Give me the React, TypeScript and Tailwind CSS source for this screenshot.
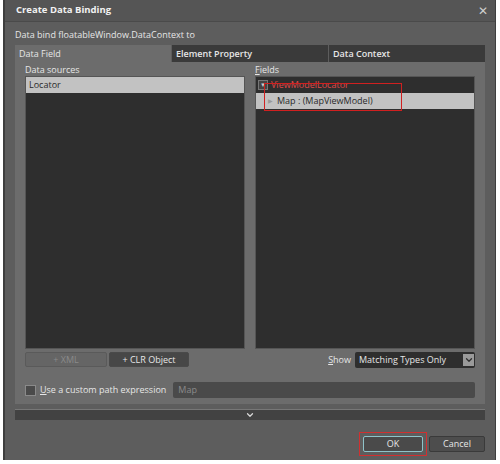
import { ChevronDown } from "lucide-react";

const font = { fontFamily: '"Open Sans", "Noto Sans", sans-serif' };

function Checkbox() {
  return <span className="h-[11px] w-[11px] border border-[#8a8a8a] bg-[#4a4a4a]" />;
}

export default function App() {
  return (
    <div className="h-[464px] w-[500px] bg-white pb-[4px] pl-[3px] pr-[4px]" style={font}>
      <div className="flex h-full flex-col border-l-2 border-r border-[#3e3e3e] bg-[#5d5d5d] text-[#e6e6e6]">
        {/* title bar */}
        <div className="flex h-[22px] shrink-0 items-center justify-between border-b border-[#4a4a4a] bg-[#555555] pl-[11px] pr-[7px]">
          <span className="text-[9.5px] font-bold text-[#f2f2f2]">Create Data Binding</span>
          <span className="text-[12px] leading-none text-[#cfcfcf]">✕</span>
        </div>

        <div className="flex flex-1 flex-col px-[10px]">
          <p className="mt-[5px] h-[16px] text-[9px] leading-[16px]">Data bind floatableWindow.DataContext to</p>

          {/* tabs */}
          <div className="mt-[2px] grid h-[17px] grid-cols-3 gap-[1px] text-[9px] leading-[17px]">
            <div className="bg-[#6c6c6c] px-[4px]">Data Field</div>
            <div className="bg-[#3a3a3a] px-[4px] font-semibold">Element Property</div>
            <div className="bg-[#3a3a3a] px-[4px] font-semibold">Data Context</div>
          </div>

          {/* tab content */}
          <div className="flex h-[342px] flex-col bg-[#6c6c6c] px-[10px] pt-[2px]">
            <div className="grid grid-cols-2 gap-[10px]">
              <div className="flex flex-col">
                <span className="h-[12px] text-[9px] leading-[12px]">Data sources</span>
                <div className="h-[273px] border border-[#555] bg-[#2e2e2e]">
                  <div className="h-[16px] bg-[#c2c2c2] px-[3px] text-[9px] leading-[16px] text-[#2a2a2a]">Locator</div>
                </div>
                <div className="mt-[3px] flex gap-[2px] text-[9px]">
                  <div className="flex h-[15px] w-[82px] items-center justify-center rounded-[2px] border border-[#5a5a5a] bg-[#656565] text-[#8a8a8a]">+ XML</div>
                  <div className="flex h-[15px] w-[80px] items-center justify-center rounded-[2px] border border-[#4a4a4a] bg-[#474747] text-[#e6e6e6]">+ CLR Object</div>
                </div>
              </div>

              <div className="flex flex-col">
                <span className="h-[12px] text-[9px] leading-[12px]">
                  <u>F</u>ields
                </span>
                <div className="relative h-[273px] border border-[#555] bg-[#2e2e2e] text-[9px]">
                  <div className="flex h-[16px] items-center gap-[3px] px-[2px]">
                    <span className="flex h-[10px] w-[10px] items-center justify-center border border-[#777] bg-[#444] text-[6px] text-[#ccc]">▼</span>
                    <span className="text-[#e04848]">ViewModelLocator</span>
                  </div>
                  <div className="flex h-[16px] items-center gap-[4px] bg-[#c2c2c2] pl-[12px] text-[#2a2a2a]">
                    <span className="text-[6px] text-[#999]">▶</span>
                    <span>Map : (MapViewModel)</span>
                  </div>
                  <div className="absolute left-[8px] top-[6px] h-[28px] w-[138px] border border-[#d02020]" />
                </div>
                <div className="mt-[3px] flex items-center justify-end gap-[4px] text-[9px]">
                  <span>
                    <u>S</u>how
                  </span>
                  <div className="flex h-[16px] w-[120px] items-center justify-between rounded-[2px] bg-[#2e2e2e] pl-[4px] pr-[1px]">
                    <span>Matching Types Only</span>
                    <span className="flex h-[12px] w-[11px] items-center justify-center bg-[#9a9a9a]">
                      <ChevronDown size={10} strokeWidth={3} className="text-[#2e2e2e]" />
                    </span>
                  </div>
                </div>
              </div>
            </div>

            <div className="mt-[14px] flex items-center gap-[4px] text-[9px]">
              <Checkbox />
              <span>
                <u>U</u>se a custom path expression
              </span>
              <div className="ml-[3px] flex h-[16px] flex-1 items-center rounded-[2px] bg-[#4a4a4a] px-[5px] text-[#8a8a8a]">Map</div>
            </div>
          </div>

          {/* expander */}
          <div className="mt-[5px] flex h-[11px] items-center justify-center border-t border-[#777] bg-[#424242]">
            <ChevronDown size={10} strokeWidth={3} className="text-[#d8d8d8]" />
          </div>

          {/* footer */}
          <div className="mt-auto mb-[4px] flex justify-end gap-[2px] text-[9px]">
            <div className="border border-[#d03030] p-[3px]">
              <div className="flex h-[16px] w-[60px] items-center justify-center rounded-[2px] border border-[#8fc3c9] bg-[#4a4a4a]">OK</div>
            </div>
            <div className="mt-[4px] flex h-[16px] w-[56px] items-center justify-center rounded-[2px] border border-[#3a3a3a] bg-[#4d4d4d]">Cancel</div>
          </div>
        </div>
      </div>
    </div>
  );
}
